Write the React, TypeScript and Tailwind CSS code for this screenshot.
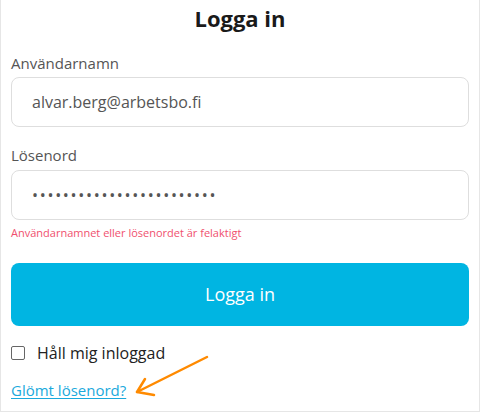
import React from "react";

const font = { fontFamily: '"Open Sans", "Noto Sans", sans-serif' };

export default function App() {
  return (
    <div className="w-[480px] h-[412px] bg-white" style={font}>
      <div className="h-[412px] border-x border-b border-[#e6e6e6] px-[10px] relative">
        <h1 className="text-center text-[22px] font-bold text-[#1a1a1a] leading-none pt-[7px]">
          Logga in
        </h1>

        <label className="block mt-[24px] text-[15px] leading-5 text-[#555]">Användarnamn</label>
        <input
          readOnly
          defaultValue="alvar.berg@arbetsbo.fi"
          className="mt-[4px] w-full h-[50px] rounded-lg border border-[#dedede] px-5 text-[16px] text-[#555] outline-none"
        />

        <label className="block mt-[18px] text-[15px] leading-5 text-[#555]">Lösenord</label>
        <input
          type="password"
          readOnly
          defaultValue="abcdefghijklmnopqrstuvwx"
          className="mt-[5px] w-full h-[50px] rounded-lg border border-[#dedede] px-5 text-[16px] tracking-[1.7px] text-[#555] outline-none"
        />
        <p className="mt-[5px] text-[11px] leading-4 text-[#f0506e]">Användarnamnet eller lösenordet är felaktigt</p>

        <button className="mt-[22px] w-full h-[63px] rounded-lg bg-[#00b5e2] text-white text-[18px]">
          Logga in
        </button>

        <label className="flex items-center gap-3 mt-[15px] text-[16px] text-[#222]">
          <span className="w-[14px] h-[14px] rounded-[2px] border border-[#666] bg-white" />
          Håll mig inloggad
        </label>

        <a className="inline-block mt-[14px] text-[15px] text-[#1aa9dc] underline underline-offset-2">
          Glömt lösenord?
        </a>

        <svg className="absolute left-[130px] top-[350px]" width="82" height="52" viewBox="0 0 82 52" fill="none">
          <path d="M76 7 L6 42" stroke="#ff8a00" strokeWidth="2.5" strokeLinecap="round" />
          <path d="M14 29 L6 42 L23 45" stroke="#ff8a00" strokeWidth="2.5" strokeLinecap="round" strokeLinejoin="round" />
        </svg>
      </div>
    </div>
  );
}
